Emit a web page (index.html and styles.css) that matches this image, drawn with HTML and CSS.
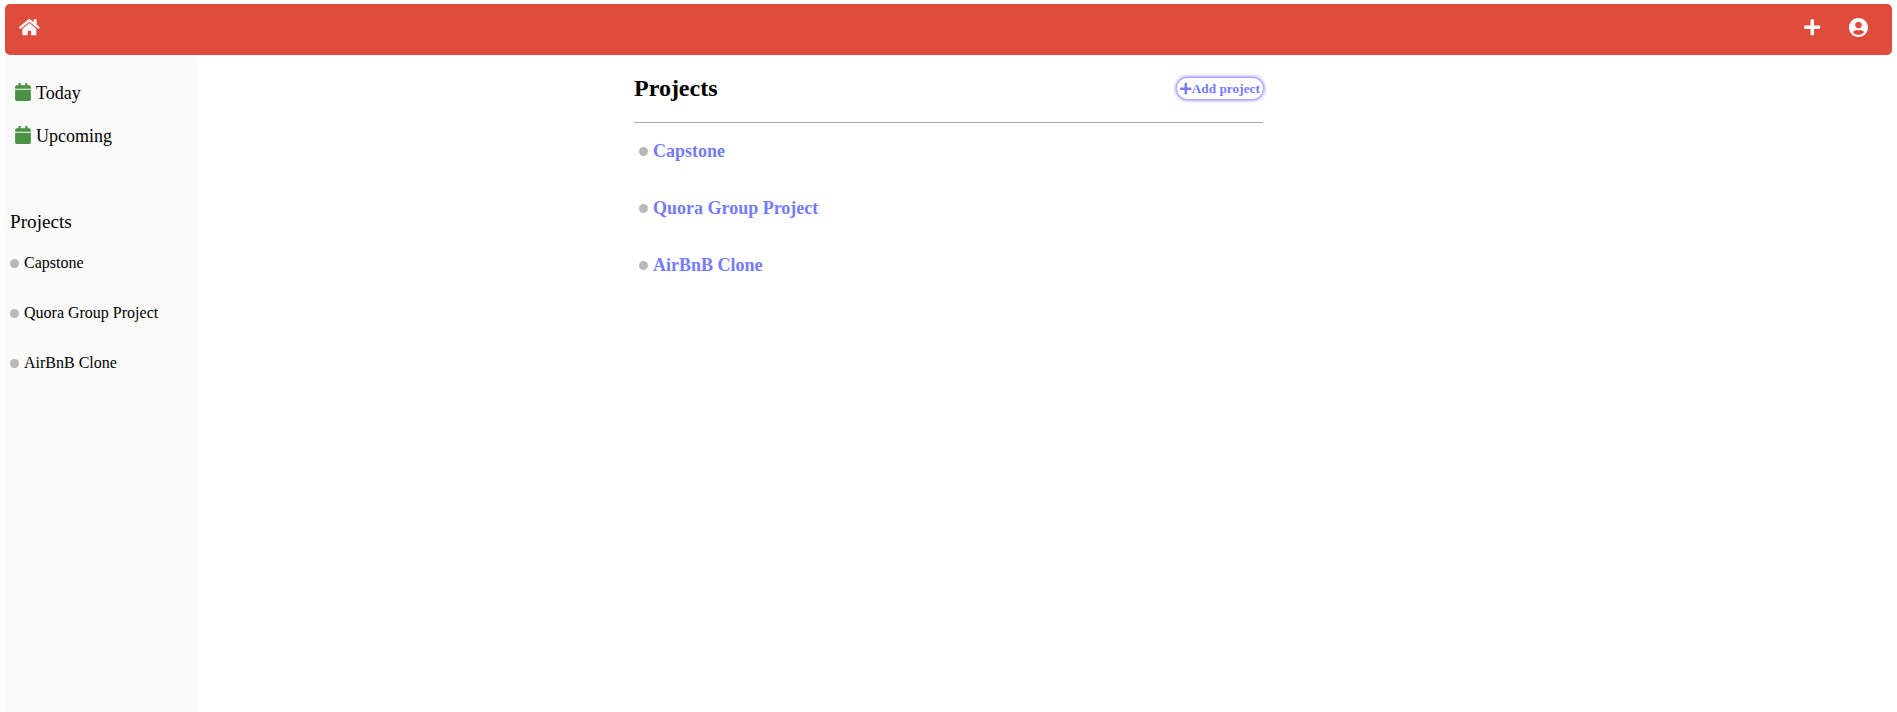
FILE: index.html
```html
<!DOCTYPE html>
<html lang="en">
<head>
<meta charset="utf-8">
<title>Projects</title>
<link rel="stylesheet" href="styles.css">
</head>
<body>
<svg class="sprite" aria-hidden="true">
  <symbol id="plus" viewBox="0 0 448 512"><path d="M416 208H272V64c0-17.67-14.33-32-32-32h-32c-17.67 0-32 14.33-32 32v144H32c-17.67 0-32 14.33-32 32v32c0 17.67 14.33 32 32 32h144v144c0 17.67 14.33 32 32 32h32c17.67 0 32-14.33 32-32V304h144c17.67 0 32-14.33 32-32v-32c0-17.67-14.33-32-32-32z"/></symbol>
  <symbol id="calendar" viewBox="0 0 448 512"><path d="M12 192h424c6.6 0 12 5.4 12 12v260c0 26.5-21.5 48-48 48H48c-26.5 0-48-21.5-48-48V204c0-6.6 5.4-12 12-12zm436-44v-36c0-26.5-21.5-48-48-48h-48V12c0-6.6-5.4-12-12-12h-40c-6.6 0-12 5.4-12 12v52H160V12c0-6.6-5.4-12-12-12h-40c-6.6 0-12 5.4-12 12v52H48C21.5 64 0 85.5 0 112v36c0 6.6 5.4 12 12 12h424c6.6 0 12-5.4 12-12z"/></symbol>
</svg>
<header class="navbar">
  <a class="nav-home"><svg class="icon-home" viewBox="0 0 576 512"><path d="M280.37 148.26L96 300.11V464a16 16 0 0 0 16 16l112.06-.29a16 16 0 0 0 15.92-16V368a16 16 0 0 1 16-16h64a16 16 0 0 1 16 16v95.64a16 16 0 0 0 16 16.05L464 480a16 16 0 0 0 16-16V300L295.67 148.26a12.19 12.19 0 0 0-15.3 0zM571.6 251.47L488 182.56V44.05a12 12 0 0 0-12-12h-56a12 12 0 0 0-12 12v72.61L318.47 43a48 48 0 0 0-61 0L4.34 251.47a12 12 0 0 0-1.6 16.9l25.5 31A12 12 0 0 0 45.15 301l235.22-193.74a12.19 12.19 0 0 1 15.3 0L530.9 301a12 12 0 0 0 16.9-1.6l25.5-31a12 12 0 0 0-1.7-16.93z"/></svg></a>
  <div class="nav-actions">
    <svg class="icon-plus"><use href="#plus"/></svg>
    <svg class="icon-user" viewBox="0 8 496 496"><path d="M248 8C111 8 0 119 0 256s111 248 248 248 248-111 248-248S385 8 248 8zm0 96c48.6 0 88 39.4 88 88s-39.4 88-88 88-88-39.4-88-88 39.4-88 88-88zm0 344c-58.7 0-111.3-26.6-146.5-68.2 18.8-35.4 55.6-59.8 98.5-59.8 2.4 0 4.8.4 7.1 1.1 13 4.2 26.6 6.9 40.9 6.9 14.3 0 28-2.7 40.9-6.9 2.3-.7 4.7-1.1 7.1-1.1 42.9 0 79.7 24.4 98.5 59.8C359.3 421.4 306.7 448 248 448z"/></svg>
  </div>
</header>
<div class="layout">
  <nav class="sidebar">
    <a class="side-link"><svg class="icon-calendar"><use href="#calendar"/></svg><span>Today</span></a>
    <a class="side-link"><svg class="icon-calendar"><use href="#calendar"/></svg><span>Upcoming</span></a>
    <div class="side-title">Projects</div>
    <a class="side-project"><i class="dot"></i><span>Capstone</span></a>
    <a class="side-project"><i class="dot"></i><span>Quora Group Project</span></a>
    <a class="side-project"><i class="dot"></i><span>AirBnB Clone</span></a>
  </nav>
  <main class="content">
    <div class="content-head">
      <h1 class="title">Projects</h1>
      <button class="add-button"><svg class="icon-add"><use href="#plus"/></svg><span>Add project</span></button>
    </div>
    <a class="project"><i class="dot"></i><span>Capstone</span></a>
    <a class="project"><i class="dot"></i><span>Quora Group Project</span></a>
    <a class="project"><i class="dot"></i><span>AirBnB Clone</span></a>
  </main>
</div>
</body>
</html>
```

FILE: styles.css
```css
* { box-sizing: border-box; }
body {
  margin: 0;
  padding: 4px 5px 0;
  height: 712px;
  overflow: hidden;
  display: flex;
  flex-direction: column;
  background: #fff;
  color: #000;
  font-family: "Liberation Serif", "Times New Roman", serif;
}
svg { display: block; flex: none; fill: currentColor; }
.sprite { display: none; }
.navbar {
  flex: none;
  height: 51px;
  padding: 14px 24px 0 14px;
  display: flex;
  justify-content: space-between;
  border-radius: 5px;
  background: #df4c3c;
  color: #fff;
}
.icon-home { width: 20.8px; height: 18.5px; }
.nav-actions { display: flex; gap: 28.5px; }
.icon-plus { width: 16.5px; height: 18.5px; }
.icon-user { width: 19px; height: 19px; }
.layout { flex: 1; display: flex; }
.sidebar {
  width: 192px;
  padding: 16px 5px 0;
  background: #fafafa;
}
.side-link {
  height: 43px;
  padding-left: 5px;
  display: flex;
  align-items: center;
  gap: 5px;
  font-size: 18px;
}
.side-link span { padding-top: 2px; }
.icon-calendar { width: 16px; height: 18px; margin-bottom: 1px; color: #4b9144; }
.side-title {
  height: 43px;
  margin-top: 43px;
  line-height: 43px;
  font-size: 19.2px;
}
.side-project {
  height: 50px;
  display: flex;
  align-items: center;
  gap: 5px;
  font-size: 16px;
}
.side-title + .side-project { margin-top: -5px; }
.dot {
  flex: none;
  width: 9px;
  height: 9px;
  border-radius: 50%;
  background: #b8b8b8;
}
.content { width: 629px; margin-left: 437px; }
.content-head {
  height: 68px;
  padding-top: 20px;
  display: flex;
  justify-content: space-between;
  align-items: flex-start;
  border-bottom: 1px solid #a9a9a9;
}
.title { margin: 0; font-size: 24px; line-height: 27px; }
.add-button {
  width: 88px;
  height: 23px;
  margin: 2px -1px 0 0;
  padding: 0 2px 0 3px;
  display: flex;
  align-items: center;
  border: 1px solid #a6a8ff;
  border-radius: 11.5px;
  background: #fff;
  box-shadow: 0 0 3px 1px #a6a8ff;
  color: #757bfb;
  font: bold 13.33px "Liberation Serif", "Times New Roman", serif;
  white-space: nowrap;
}
.icon-add { width: 11.67px; height: 13.33px; }
.project {
  height: 57px;
  padding-left: 5px;
  display: flex;
  align-items: center;
  gap: 5px;
  color: #757bfb;
  font-size: 18px;
  font-weight: bold;
}
```
